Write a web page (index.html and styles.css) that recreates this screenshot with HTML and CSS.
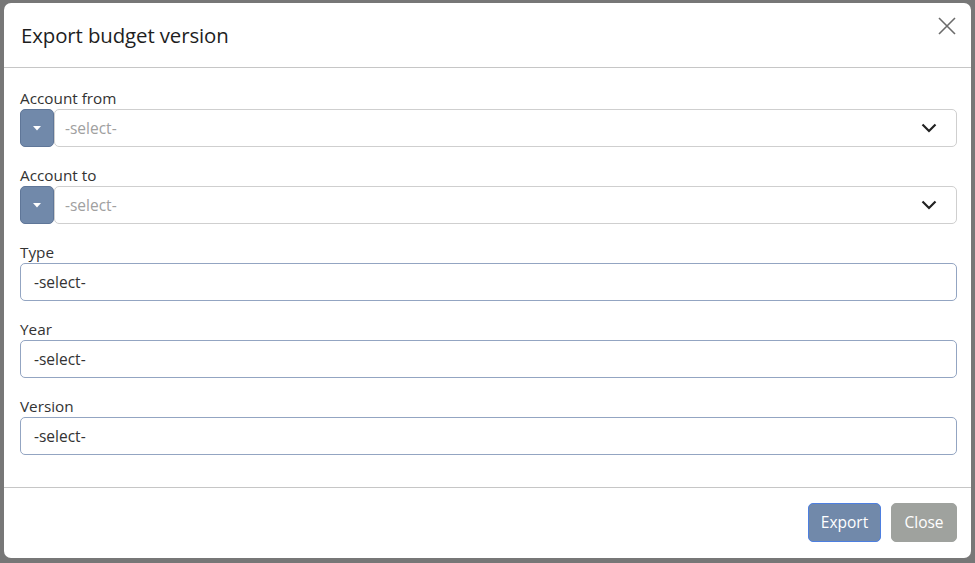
FILE: index.html
```html
<!DOCTYPE html>
<html>
<head>
<meta charset="utf-8">
<link rel="stylesheet" href="styles.css">
</head>
<body>
<div class="backdrop">
  <div class="modal">
    <div class="modal-header">
      <h5 class="modal-title">Export budget version</h5>
      <button class="btn-close" aria-label="Close">
        <svg width="18" height="18" viewBox="0 0 18 18"><path d="M1 1L17 17M17 1L1 17" stroke="#6b6b6b" stroke-width="1.6" fill="none"/></svg>
      </button>
    </div>
    <div class="modal-body">
      <div class="field">
        <label class="label">Account from</label>
        <div class="input-group">
          <button class="dd-btn"><svg width="8" height="5" viewBox="0 0 8 5"><path d="M0 0H8L4 4.5Z" fill="#fff"/></svg></button>
          <div class="select placeholder"><span>-select-</span>
            <svg class="chev" width="16" height="10" viewBox="0 0 16 10"><path d="M1.5 1.5L8 8L14.5 1.5" stroke="#222" stroke-width="2.2" fill="none"/></svg>
          </div>
        </div>
      </div>
      <div class="field">
        <label class="label">Account to</label>
        <div class="input-group">
          <button class="dd-btn"><svg width="8" height="5" viewBox="0 0 8 5"><path d="M0 0H8L4 4.5Z" fill="#fff"/></svg></button>
          <div class="select placeholder"><span>-select-</span>
            <svg class="chev" width="16" height="10" viewBox="0 0 16 10"><path d="M1.5 1.5L8 8L14.5 1.5" stroke="#222" stroke-width="2.2" fill="none"/></svg>
          </div>
        </div>
      </div>
      <div class="field">
        <label class="label">Type</label>
        <div class="text-input">-select-</div>
      </div>
      <div class="field">
        <label class="label">Year</label>
        <div class="text-input">-select-</div>
      </div>
      <div class="field">
        <label class="label">Version</label>
        <div class="text-input">-select-</div>
      </div>
    </div>
    <div class="modal-footer">
      <button class="btn btn-export">Export</button>
      <button class="btn btn-close-gray">Close</button>
    </div>
  </div>
</div>
</body>
</html>
```
FILE: styles.css
```css
* { box-sizing: border-box; }
html, body { margin: 0; padding: 0; }
body {
  background: #777777;
  font-family: "Open Sans", "Noto Sans", sans-serif;
  color: #212529;
}
.backdrop {
  width: 975px;
  height: 563px;
  padding: 3px 4px 5px 4px;
}
.modal {
  width: 967px;
  height: 555px;
  background: #fff;
  border-radius: 7px;
  display: flex;
  flex-direction: column;
}
.modal-header {
  height: 65px;
  border-bottom: 1px solid #c6c6c6;
  display: flex;
  align-items: center;
  justify-content: space-between;
  padding: 0 15px 0 17px;
}
.modal-title {
  margin: 0;
  font-size: 20.4px;
  font-weight: 500;
  color: #1e1e1e;
  letter-spacing: -0.1px;
}
.btn-close {
  border: none;
  background: none;
  padding: 0;
  width: 18px;
  height: 18px;
  margin-top: -18px;
  display: flex;
}
.modal-body {
  padding: 19px 14px 0 16px;
  height: 420px;
  border-bottom: 1px solid #c6c6c6;
}
.field {
  margin-bottom: 17px;
}
.label {
  display: block;
  font-size: 15.3px;
  line-height: 22px;
  color: #333;
}
.input-group {
  display: flex;
  height: 38px;
}
.dd-btn {
  width: 34px;
  height: 38px;
  border: 1px solid #5f7698;
  background: #7189aa;
  border-radius: 5px;
  display: flex;
  align-items: center;
  justify-content: center;
  padding: 0;
}
.select {
  flex: 1;
  border: 1px solid #cfcfcf;
  border-radius: 5px;
  display: flex;
  align-items: center;
  justify-content: space-between;
  padding: 0 19px 0 10px;
  font-size: 15.5px;
  color: #a0a0a0;
}
.chev { display: block; }
.text-input {
  height: 38px;
  border: 1px solid #93a5c2;
  border-radius: 5px;
  display: flex;
  align-items: center;
  padding: 0 13px;
  font-size: 15.5px;
  color: #333;
}
.modal-footer {
  flex: 1;
  display: flex;
  justify-content: flex-end;
  align-items: center;
  gap: 10px;
  padding: 0 14px 2px 0;
}
.btn {
  height: 39px;
  border-radius: 5px;
  font-family: "Open Sans", "Noto Sans", sans-serif;
  font-size: 15.5px;
  color: #fff;
  padding: 0 10px;
}
.btn-export {
  width: 73px;
  background: #7189aa;
  border: 1px solid #4d7fe0;
}
.btn-close-gray {
  width: 66px;
  background: #9fa29e;
  border: 1px solid #9fa29e;
}
```
